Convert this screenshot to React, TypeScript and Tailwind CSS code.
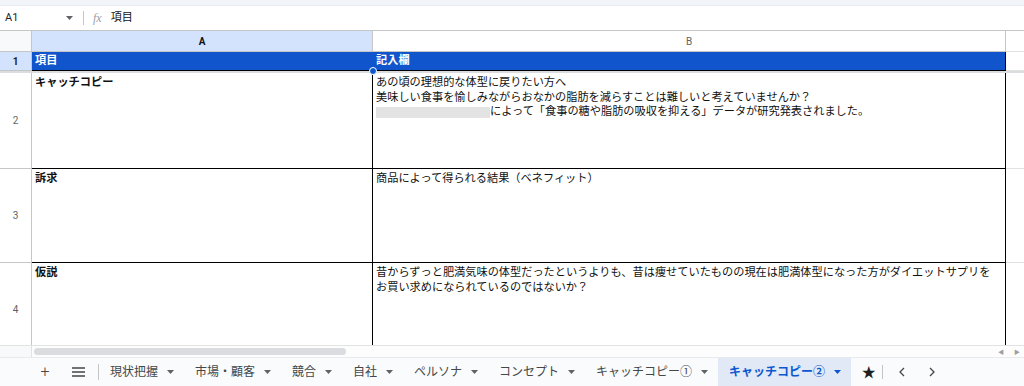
import React from 'react';

const font = { fontFamily: 'Roboto, "Noto Sans CJK JP", sans-serif' };

function Caret({ active }: { active?: boolean }) {
  return (
    <svg width="7" height="4" viewBox="0 0 7 4" className="shrink-0">
      <path d="M0 0h7L3.5 4z" fill={active ? '#0b57d0' : '#5f6368'} />
    </svg>
  );
}

const tabs = ['現状把握', '市場・顧客', '競合', '自社', 'ペルソナ', 'コンセプト', 'キャッチコピー①', 'キャッチコピー②'];

function RowHead({ n, h, selected }: { n: number; h: string; selected?: boolean }) {
  return (
    <div
      className={`${h} w-[32px] shrink-0 flex items-center justify-center border-r border-b border-[#c4c7c5] text-[10px] ${
        selected ? 'bg-[#d3e3fd] text-[#1f1f1f] font-bold' : 'bg-white text-[#5f6368]'
      }`}
    >
      {n}
    </div>
  );
}

export default function App() {
  return (
    <div className="w-[1024px] h-[386px] overflow-hidden flex flex-col bg-white text-[#111]" style={font}>
      {/* top strip */}
      <div className="h-[6px] bg-[#f1f4f9] border-b border-[#e8ecf2]" />

      {/* formula bar */}
      <div className="h-[25px] flex items-center border-b border-[#c4c7c5]">
        <div className="w-[83px] flex items-center pl-[5px] pr-[10px]">
          <span className="text-[11px] text-[#1f1f1f]">A1</span>
          <span className="ml-auto"><Caret /></span>
        </div>
        <div className="w-px h-[14px] bg-[#c4c7c5]" />
        <span className="ml-[9px] text-[12px] italic text-[#9aa0a6]" style={{ fontFamily: '"Liberation Serif", serif' }}>fx</span>
        <span className="ml-[9px] text-[11px]">項目</span>
      </div>

      {/* grid */}
      <div className="flex-1 overflow-hidden relative">
        {/* column headers */}
        <div className="flex h-[21px]">
          <div className="w-[32px] shrink-0 bg-[#f8f9fa] border-r border-b border-[#c4c7c5]" />
          <div className="w-[341px] shrink-0 bg-[#d3e3fd] border-r border-b border-[#c4c7c5] flex items-center justify-center text-[10px] font-bold">A</div>
          <div className="w-[633px] shrink-0 bg-white border-r border-b border-[#c4c7c5] flex items-center justify-center text-[10px] text-[#5f6368]">B</div>
          <div className="flex-1 border-b border-[#e1e3e1]" />
        </div>

        {/* row 1 */}
        <div className="flex h-[19px]">
          <RowHead n={1} h="h-[19px]" selected />
          <div className="w-[341px] shrink-0 bg-[#1155cc] border-b border-black pl-[3px] flex items-center text-[11.2px] font-bold text-white">項目</div>
          <div className="w-[633px] shrink-0 bg-[#1155cc] border-b border-r border-black pl-[3px] flex items-center text-[11.2px] font-bold text-white">記入欄</div>
          <div className="flex-1 border-b border-[#e1e3e1]" />
        </div>
        {/* freeze bar */}
        <div className="h-[2px] bg-[#dadce0]" />

        {/* row 2 */}
        <div className="flex h-[96px]">
          <RowHead n={2} h="h-[96px]" />
          <div className="w-[341px] shrink-0 border-r border-b border-black pl-[3px] pt-[3px] text-[11.2px] leading-[14.5px] font-bold">キャッチコピー</div>
          <div className="w-[633px] shrink-0 border-r border-b border-black pl-[3px] pt-[3px] text-[11.2px] leading-[14.5px]">
            <div>あの頃の理想的な体型に戻りたい方へ</div>
            <div>美味しい食事を愉しみながらおなかの脂肪を減らすことは難しいと考えていませんか？</div>
            <div className="flex items-center">
              <span className="inline-block w-[114px] h-[11px] bg-[#e3e3e3] rounded-[1px]" />
              <span>によって「食事の糖や脂肪の吸収を抑える」データが研究発表されました。</span>
            </div>
          </div>
          <div className="flex-1 border-b border-[#e1e3e1]" />
        </div>

        {/* row 3 */}
        <div className="flex h-[94px]">
          <RowHead n={3} h="h-[94px]" />
          <div className="w-[341px] shrink-0 border-r border-b border-black pl-[3px] pt-[3px] text-[11.2px] leading-[14.5px] font-bold">訴求</div>
          <div className="w-[633px] shrink-0 border-r border-b border-black pl-[3px] pt-[3px] text-[11.2px] leading-[14.5px]">商品によって得られる結果（ベネフィット）</div>
          <div className="flex-1 border-b border-[#e1e3e1]" />
        </div>

        {/* row 4 */}
        <div className="flex h-[94px]">
          <RowHead n={4} h="h-[94px]" />
          <div className="w-[341px] shrink-0 border-r border-black pl-[3px] pt-[3px] text-[11.2px] leading-[14.5px] font-bold">仮説</div>
          <div className="w-[633px] shrink-0 border-r border-black pl-[3px] pt-[3px] text-[11.2px] leading-[14.5px] whitespace-nowrap">
            <div>昔からずっと肥満気味の体型だったというよりも、昔は痩せていたものの現在は肥満体型になった方がダイエットサプリを</div>
            <div>お買い求めになられているのではないか？</div>
          </div>
          <div className="flex-1" />
        </div>

        {/* selection handle */}
        <div className="absolute left-[369px] top-[36px] w-[8px] h-[8px] rounded-full bg-[#0b57d0] border border-white" />
      </div>

      {/* horizontal scrollbar */}
      <div className="h-[12px] flex border-t border-[#e1e3e1]">
        <div className="w-[32px] bg-[#f8f9fa] border-r border-[#e1e3e1]" />
        <div className="flex-1 flex items-center pl-[2px] bg-[#fdfdfd]">
          <div className="w-[312px] h-[7px] rounded-full bg-[#dadce0]" />
          <div className="ml-auto mr-[4px] flex gap-[10px] text-[6px] text-[#9aa0a6]">
            <span>◀</span>
            <span>▶</span>
          </div>
        </div>
      </div>

      {/* sheet tabs */}
      <div className="h-[29px] flex items-stretch bg-[#f9fbfd] border-t border-[#e8eaed] text-[12px] text-[#444746]">
        <div className="w-[31px]" />
        <div className="w-[28px] flex items-center justify-center text-[16px] text-[#444746] font-light">+</div>
        <div className="w-[5px]" />
        <div className="w-[28px] flex items-center justify-center">
          <svg width="13" height="10" viewBox="0 0 13 10">
            <path d="M0 1h13M0 5h13M0 9h13" stroke="#444746" strokeWidth="1.4" />
          </svg>
        </div>
        <div className="w-[6px]" />
        <div className="w-px my-[6px] bg-[#c4c7c5]" />
        {tabs.map((t, i) => {
          const active = i === tabs.length - 1;
          return (
            <div
              key={t}
              className={`flex items-center gap-[9px] pl-[11px] pr-[10px] whitespace-nowrap ${
                active ? 'bg-[#e1e9f7] text-[#0b57d0] font-bold' : ''
              }`}
            >
              <span>{t}</span>
              <Caret active={active} />
            </div>
          );
        })}
        <div className="w-[31px] pl-[4px] flex items-center justify-center text-[14px] text-[#1f1f1f]">★</div>
        <div className="w-px my-[7px] bg-[#c4c7c5]" />
        <div className="w-[38px] flex items-center justify-center">
          <svg width="6" height="10" viewBox="0 0 6 10"><path d="M5 1L1 5l4 4" fill="none" stroke="#444746" strokeWidth="1.3" /></svg>
        </div>
        <div className="w-[22px] flex items-center justify-center">
          <svg width="6" height="10" viewBox="0 0 6 10"><path d="M1 1l4 4-4 4" fill="none" stroke="#444746" strokeWidth="1.3" /></svg>
        </div>
      </div>
    </div>
  );
}
